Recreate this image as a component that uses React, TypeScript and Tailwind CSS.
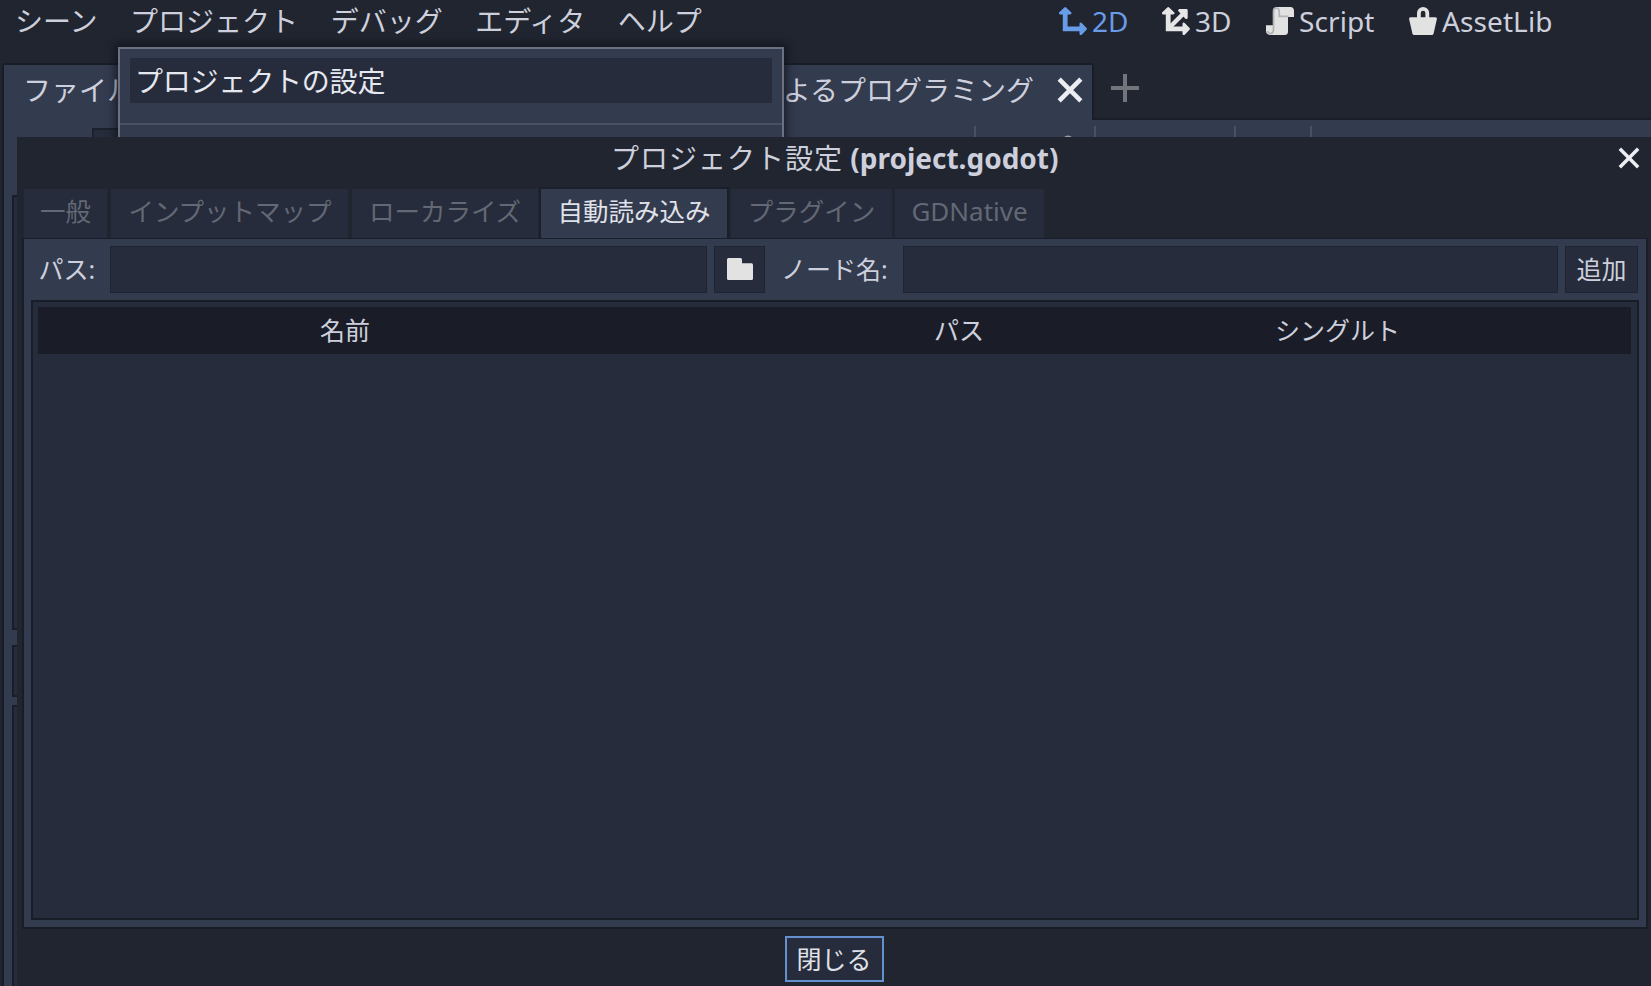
import type { ReactNode } from 'react';

const MENU = ['シーン', 'プロジェクト', 'デバッグ', 'エディタ', 'ヘルプ'];

function Icon2D({ diagonal = false }: { diagonal?: boolean }) {
  return (
    <svg width="28" height="28" viewBox="0 0 28 28" fill="currentColor" stroke="currentColor" strokeLinejoin="round">
      <path d="M6.2 7V21.8H21" fill="none" strokeWidth="4.8" strokeLinejoin="miter" />
      <path d="M6.2 1.4L11.2 6.2H1.2Z" strokeWidth="2.6" />
      <path d="M26.6 21.8L21.8 26.8V16.8Z" strokeWidth="2.6" />
      {diagonal && (
        <>
          <path d="M6.5 21.5L21 7" fill="none" strokeWidth="4.4" />
          <path d="M17.4 3.4H24.4V10.8Z" strokeWidth="2.6" />
        </>
      )}
    </svg>
  );
}

function IconScript() {
  return (
    <svg width="28" height="28" viewBox="0 0 28 28">
      <path d="M10.5 0H24.500Q28 0.300 28 4V10H22V24.500Q22 28 18.500 28H4Q0 27.500 0 24V18.200H7V4Q7.200 0.400 10.500 0Z" fill="#e2e2e2" />
      <path d="M10.5 0.800Q7.500 1 7.500 4.200V23.500Q7 26.400 4.200 26.600Q2 26.400 1.800 24M10.5 1Q13.300 1.500 13.300 4.500V9.300H22.500" fill="none" stroke="#b2b3b5" strokeWidth="1.700" />
    </svg>
  );
}

function IconBasket() {
  return (
    <svg width="28" height="28" viewBox="0 0 28 28">
      <path d="M9.900 12V6.100A4.200 4.200 0 0 1 18.300 6.100V12" fill="none" stroke="#e2e2e2" strokeWidth="3.800" />
      <path d="M1.500 10.300H26.500Q28.200 10.500 27.900 12L24.600 26.500Q24.200 28 22.800 28H5.200Q3.800 28 3.400 26.500L0.100 12Q-0.200 10.500 1.500 10.300Z" fill="#e2e2e2" />
    </svg>
  );
}

function Mode({ icon, label, className }: { icon: ReactNode; label: string; className: string }) {
  return (
    <div className={`flex shrink-0 items-start gap-[5px] ${className}`}>
      <span className="mt-[7px] block h-7 w-7">{icon}</span>
      <span className="mt-[1px] leading-[40px] tracking-[0.1px]">{label}</span>
    </div>
  );
}

function Cross({ size, stroke }: { size: number; stroke: number }) {
  return (
    <svg width={size} height={size} viewBox="0 0 24 24" stroke="#eceef2" strokeWidth={stroke} fill="none">
      <path d="M2 2L22 22M22 2L2 22" />
    </svg>
  );
}

function Tab({ label, className }: { label: string; className: string }) {
  return (
    <div className={`flex h-[50px] shrink-0 items-center justify-center whitespace-nowrap bg-[#262c3b] pb-[5px] text-[#636875] ${className}`}>
      {label}
    </div>
  );
}

function Editor() {
  return (
    <div className="flex h-[986px] flex-col">
      <header className="flex h-[63px] shrink-0 items-start">
        <nav className="flex w-[1059px] shrink-0 gap-[32.5px] pl-[15px] pt-[1px] leading-[40px]">
          {MENU.map((m) => (
            <span key={m} className="whitespace-nowrap">{m}</span>
          ))}
        </nav>
        <Mode className="w-[103px] text-[#699ce8]" icon={<Icon2D />} label="2D" />
        <Mode className="w-[104px] [&_svg]:text-[#e6e6e6]" icon={<Icon2D diagonal />} label="3D" />
        <Mode className="w-[143px]" icon={<IconScript />} label="Script" />
        <Mode className="" icon={<IconBasket />} label="AssetLib" />
      </header>
      <div className="flex min-h-0 flex-1 pl-[2px]">
        <div className="flex flex-1 flex-col border-l-2 border-[#191d28]">
          <div className="flex h-[57px] shrink-0">
            <div className="flex w-[1090px] shrink-0 items-center justify-between border-r-2 border-t-2 border-[#191d28] bg-[#333b4f] pb-[5px] pl-[19px] pr-[9px]">
              <span>ファイル</span>
              <div className="flex items-center gap-[23px]">
                <span className="whitespace-nowrap">よるプログラミング</span>
                <Cross size={26} stroke={4.2} />
              </div>
            </div>
            <div className="flex flex-1 items-start border-b-2 border-[#191d28] pl-[17px] pt-[11px]">
              <svg width="28" height="28" viewBox="0 0 28 28" stroke="#73757a" strokeWidth="4">
                <path d="M14 0V28M0 14H28" />
              </svg>
            </div>
          </div>
          <div className="flex flex-1 flex-col bg-[#333b4f]">
            <div className="flex h-[75px] shrink-0 items-start pl-[88px] pt-[6px]">
              <div className="mt-[2px] h-[40px] w-[300px] border-2 border-[#1d212d] bg-[#262c3b]" />
              <div className="ml-[582px] h-10 w-[2px] bg-[#4a5164]" />
              <svg className="ml-[86px] mt-[9px]" width="12" height="12" viewBox="0 0 12 12"><circle cx="6" cy="6" r="5.5" fill="#9a9ea8" /></svg>
              <div className="ml-[20px] h-10 w-[2px] bg-[#4a5164]" />
              <div className="ml-[138px] h-10 w-[2px] bg-[#4a5164]" />
              <div className="ml-[74px] h-10 w-[2px] bg-[#4a5164]" />
            </div>
            <div className="ml-[8px] h-[435px] shrink-0 border-2 border-[#191d28] bg-[#262c3b]" />
            <div className="ml-[8px] mt-[15px] h-[52px] shrink-0 border-2 border-[#191d28] bg-[#262c3b]" />
            <div className="ml-[8px] mt-[8px] flex-1 border-l-2 border-t-2 border-[#191d28] bg-[#262c3b]" />
          </div>
        </div>
      </div>
    </div>
  );
}

const FIELD = 'h-[47px] shrink-0 border border-[#1f2431] bg-[#262c3b]';

function Dialog() {
  return (
    <div className="absolute left-[17px] top-[137px] flex h-[849px] w-[1634px] flex-col bg-[#202530]">
      <div className="flex h-[52px] shrink-0 items-start">
        <h1 className="ml-[594px] mt-[1px] flex-1 whitespace-nowrap leading-[41px]">
          <span className="tracking-[1px]">プロジェクト設定</span>
          <span className="font-bold"> (project.godot)</span>
        </h1>
        <span className="mr-[11px] mt-[10px] block"><Cross size={22} stroke={3.8} /></span>
      </div>
      <div className="flex h-[50px] shrink-0 pl-[7px] text-[25.5px]">
        <Tab label="一般" className="w-[83px]" />
        <Tab label="インプットマップ" className="ml-[4px] w-[237px] pl-[1px]" />
        <Tab label="ローカライズ" className="ml-[4px] w-[186px]" />
        <div className="-mt-[2px] ml-[1px] flex h-[52px] w-[190px] shrink-0 items-center justify-center whitespace-nowrap border-x-2 border-t-2 border-[#1b1f2b] bg-[#333b4f] pb-[5px] text-[#e0e2ea]">自動読み込み</div>
        <Tab label="プラグイン" className="ml-[2px] w-[161px]" />
        <Tab label="GDNative" className="ml-[3px] w-[149px] text-[26px]" />
      </div>
      <div className="ml-[5px] flex h-[690px] w-[1626px] shrink-0 flex-col border-x-2 border-b-2 border-[#191d28] bg-[#333b4f] px-[7px] pb-[7px] pt-[7px] shadow-[0_-1px_0_#1b1f2b]">
        <div className="flex h-[54px] shrink-0 text-[25px] leading-[47px]">
          <span className="w-[79px] pl-[7.5px]">パス:</span>
          <div className={`${FIELD} w-[597px]`} />
          <div className={`${FIELD} ml-[7px] flex w-[51px] items-center justify-center pb-px`}>
            <svg width="26" height="22" viewBox="0 0 26 22"><path d="M1.500 0H13.500Q15 0 15 1.500V5.300H24.500Q26 5.300 26 7V20.500Q26 22 24.500 22H1.500Q0 22 0 20.500V1.500Q0 0 1.500 0Z" fill="#e2e2e2" /></svg>
          </div>
          <span className="w-[138px] shrink-0 pl-[16px]">ノード名:</span>
          <div className={`${FIELD} w-[655px]`} />
          <div className={`${FIELD} ml-[7px] w-[73px] text-center leading-[45px]`}>追加</div>
        </div>
        <div className="flex-1 border-2 border-[#191d28] bg-[#262c3b] p-[5px] pr-[6px]">
          <div className="flex h-[47px] bg-[#1a1d28] text-[25px] leading-[47px]">
            <span className="w-[614px] text-center">名前</span>
            <span className="w-[614px] text-center">パス</span>
            <span className="flex-1 pl-[9px]">シングルト</span>
          </div>
        </div>
      </div>
      <div className="flex flex-1 justify-center pt-[7px]">
        <button className="h-[46px] w-[99px] border-2 border-[#6490cf] bg-[#262c3b] text-[25px] leading-[41px] text-[#e0e2ea]">閉じる</button>
      </div>
    </div>
  );
}

export default function App() {
  return (
    <div className="relative h-[986px] w-[1651px] overflow-hidden bg-[#202530] font-['Noto_Sans','Noto_Sans_CJK_JP',sans-serif] text-[28px] text-[#cdd0dc]">
      <Editor />
      <div className="absolute left-[118px] top-[47px] h-[120px] w-[666px] border-2 border-[#6c7182] bg-[#333b4f] pt-[9px] shadow-[0_0_8px_3px_rgba(10,12,20,0.6)]">
        <div className="mx-[10px] h-[45px] bg-[#262c3b] pl-[5px] leading-[46px] tracking-[-0.2px] text-[#e6e8f0]">プロジェクトの設定</div>
        <div className="mt-[20px] h-[2px] bg-[#4b5165]" />
      </div>
      <Dialog />
    </div>
  );
}
